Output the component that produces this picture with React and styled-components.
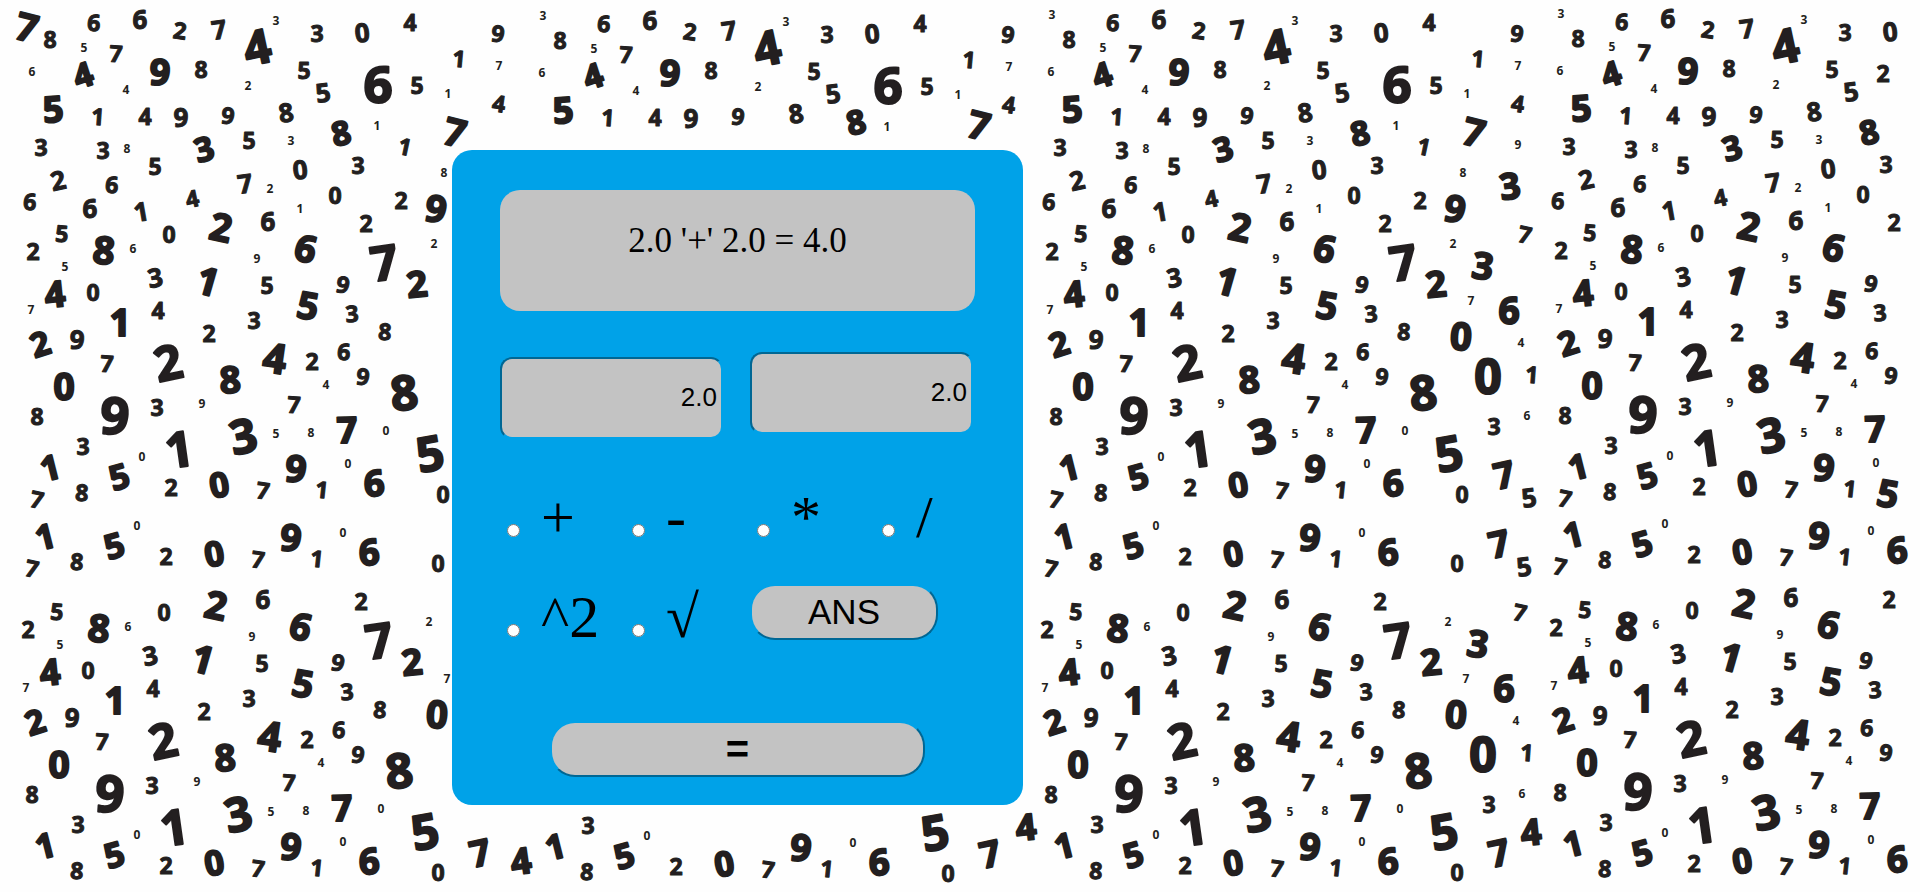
import React, { useState } from "react";
import styled, { createGlobalStyle } from "styled-components";

const BLUE = "#00a2e8";
const GREY = "#c3c3c3";
const INK = "#231f20";

const GlobalStyle = createGlobalStyle`
  body {
    margin: 0;
    background: #fefefe;
    overflow-x: hidden;
  }
`;

/* One tile of the wallpaper: digit, centre x, centre y, height, tilt in degrees. */
const TILE = `
3 33 14 9 0|8 50 39 18 0|6 94 22 18 4|6 140 19 20 0|2 180 30 18 8|7 219 29 20 -8|4 257 47 36 -12|3 276 20 9 0
3 317 33 18 0|0 362 32 20 -6|4 410 22 18 0|5 84 47 9 0|7 116 53 18 4|1 459 58 18 5|6 32 71 9 0|4 83 75 26 -18
9 160 72 28 4|8 201 69 18 0|5 304 70 18 0|2 248 85 9 0|4 126 89 9 0|6 378 84 39 0|5 323 92 20 -8|5 417 85 18 0
1 448 93 9 0|5 53 109 28 -4|1 98 116 18 4|4 145 116 18 0|9 181 117 20 0|9 228 115 18 8|8 286 112 20 -8
8 341 133 26 -12|1 377 125 9 0|7 455 132 30 14|3 41 147 18 0|3 103 150 18 0|8 127 148 9 0|5 155 166 18 0
3 204 149 26 -15|5 249 140 18 0|3 291 140 9 0|1 405 146 18 12|0 300 169 20 -6|3 358 165 18 0|8 444 172 9 0
2 58 180 20 -12|6 112 184 18 4|7 245 183 20 -8|2 270 188 9 0|0 335 195 18 0|6 30 201 18 4|6 90 208 20 0
1 141 211 20 -10|4 192 198 18 -12|1 300 208 9 0|2 401 200 18 0|9 436 208 29 10|2 221 227 30 12|6 268 221 20 0
2 366 223 18 0|5 62 233 18 4|0 169 234 18 0|6 133 248 9 0|8 104 250 30 6|2 33 251 18 0|9 257 258 9 0
6 306 248 29 14|7 384 262 37 -8|2 434 243 9 0|5 65 266 9 0|3 155 277 20 -10|1 208 281 30 16|5 267 285 18 0
9 343 284 18 12|2 417 284 28 -6|4 55 294 28 -6|0 93 292 18 0|7 31 309 9 0|1 120 322 29 0|4 158 310 18 0
3 254 320 18 0|5 308 305 29 10|3 352 313 18 -4|2 209 333 18 0|8 385 331 18 4|2 40 344 26 -18|9 77 339 20 4
7 107 363 18 4|2 168 362 37 -12|4 275 358 32 8|2 312 361 18 0|6 344 351 18 4|8 230 379 29 -3|4 326 384 9 0
9 363 376 18 8|8 404 392 37 -6|0 64 386 29 0|9 115 415 39 4|3 157 407 18 0|9 202 403 9 0|7 294 404 18 4
3 243 436 36 -12|5 276 433 9 0|8 311 432 9 0|7 347 430 28 -2|0 386 430 9 0|8 37 416 18 0|3 83 446 18 0
1 179 449 38 -8|5 430 453 37 -10|1 50 467 27 -14|0 142 456 9 0|5 119 476 27 -16|9 296 468 29 6|0 348 463 9 0
8 82 492 18 4|7 37 499 18 12|2 171 487 18 0|0 219 484 27 -10|7 263 490 18 8|1 322 489 18 6|6 374 483 28 -4
0 443 494 18 0|9 498 33 18 8|7 499 65 9 0|4 499 103 18 8|9 499 144 9 0|3 491 186 28 -8|7 506 234 18 12
3 464 265 29 8|7 452 300 9 0|6 490 310 29 0|0 442 336 30 4|4 502 342 9 0|0 469 376 37 0|1 513 374 18 4
3 475 426 18 0|6 508 415 9 0|7 485 475 28 -12|5 510 497 20 -8`
  .trim()
  .split(/[|\n]/)
  .map((entry) => entry.split(" ").map(Number));

/* The tile is stamped in four columns, each with a full row, a thin row and a lower row. */
const always = () => true;
const thin = (d, x, y) => y >= 455;
const lower = (d, x, y) => y >= 219 && y < 497;

const STAMPS = [
  { dx: 0, dy: 0, keep: (d, x, y) => (x < 450 || y < 135) && !(x === 33 && y === 14) && y !== 336 },
  { dx: -5, dy: 69, keep: (d, x, y) => thin(d, x, y) && x < 450 },
  { dx: -5, dy: 378, keep: (d, x, y) => lower(d, x, y) && (x < 455 || y > 470) },
  { dx: 510, dy: 1, keep: (d, x, y) => y < 130 },
  { dx: 505, dy: 379, keep: (d, x, y) => lower(d, x, y) && y > 440 && x !== 179 },
  { dx: 1019, dy: 0, keep: always },
  { dx: 1014, dy: 69, keep: thin },
  { dx: 1014, dy: 378, keep: lower },
  { dx: 1528, dy: -1, keep: (d, x) => x < 370 },
  { dx: 1523, dy: 67, keep: (d, x, y) => thin(d, x, y) && x < 376 },
  { dx: 1523, dy: 376, keep: (d, x, y) => lower(d, x, y) && x < 376 },
];

const EXTRAS = [
  [7, 27, 27, 30, 14],
  [8, 856, 122, 26, -12],
  [7, 979, 125, 30, 14],
  [4, 521, 861, 28, -8],
  [4, 1026, 827, 28, -6],
  [4, 1531, 832, 28, -6],
  [2, 1883, 73, 18, 0],
  [5, 1888, 493, 29, 10],
];

const DIGITS = [
  ...STAMPS.flatMap(({ dx, dy, keep }) =>
    TILE.filter(([d, x, y]) => keep(d, x, y)).map(([d, x, y, h, r]) => [d, x + dx, y + dy, h, r])
  ),
  ...EXTRAS,
];

const WallpaperSvg = styled.svg`
  position: absolute;
  inset: 0;
  z-index: -1;
  width: 100%;
  height: 100%;
  overflow: hidden;
  pointer-events: none;
  user-select: none;
`;

const Digit = styled.text`
  font-family: "Open Sans", "Noto Sans", sans-serif;
  font-weight: 700;
  font-size: ${(p) => Math.round((p.$h - p.$stroke) / 0.73)}px;
  text-anchor: middle;
  fill: ${INK};
  stroke: ${INK};
  stroke-width: ${(p) => p.$stroke}px;
  stroke-linejoin: round;
`;

function Wallpaper() {
  return (
    <WallpaperSvg aria-hidden="true">
      {DIGITS.map(([digit, x, y, h, tilt], i) => {
        const stroke = h > 24 ? 2 : h > 12 ? 1 : 0;
        return (
          <Digit
            key={i}
            $h={h}
            $stroke={stroke}
            x={x}
            y={y + Math.round((h - stroke) / 2)}
            transform={`rotate(${tilt} ${x} ${y})`}
          >
            {digit}
          </Digit>
        );
      })}
    </WallpaperSvg>
  );
}

const Page = styled.main`
  position: relative;
  z-index: 0;
  box-sizing: border-box;
  min-height: 100vh;
  padding: 150px 24px 87px 452px;
  font-family: "Liberation Serif", "Times New Roman", serif;
  color: #000;
`;

const Calculator = styled.form`
  box-sizing: border-box;
  width: 100%;
  max-width: 571px;
  padding: 40px 48px 28px;
  border-radius: 20px;
  background: ${BLUE};
`;

const Display = styled.output`
  display: block;
  box-sizing: border-box;
  min-height: 121px;
  padding-top: 31px;
  border-radius: 20px;
  background: ${GREY};
  font-size: 35px;
  line-height: 40px;
  text-align: center;
`;

const Operands = styled.div`
  display: flex;
  align-items: flex-start;
  gap: 27px;
  margin-top: 41px;
`;

const NumberBox = styled.input`
  box-sizing: border-box;
  width: 223px;
  height: 82px;
  margin: ${(p) => (p.$lowered ? "5px" : "0")} 0 0;
  padding: 0 4px 2px;
  border: 2px inset ${BLUE};
  border-radius: 12px;
  background: ${GREY};
  color: #000;
  font-family: "Liberation Sans", Arial, sans-serif;
  font-size: 26px;
  text-align: right;
`;

const Operations = styled.div`
  display: grid;
  grid-template-columns: repeat(3, 125px) 1fr;
  grid-auto-rows: 100px;
  margin-top: 28px;
`;

const Choice = styled.label`
  display: flex;
  align-items: baseline;
  gap: 21px;
  padding-left: 7px;
  font-size: 60px;
  line-height: 100px;
`;

const Radio = styled.input`
  flex: none;
  width: 13px;
  height: 13px;
  margin: 0 0 2px;
`;

const PillButton = styled.button`
  display: block;
  box-sizing: border-box;
  width: ${(p) => p.$width}px;
  height: 56px;
  padding: 0;
  border: 2px outset ${BLUE};
  border-radius: 25px;
  background: ${GREY};
  color: #000;
  font-family: "Liberation Sans", Arial, sans-serif;
  font-size: ${(p) => p.$size}px;
  font-weight: ${(p) => (p.$bold ? 700 : 400)};
  line-height: 50px;
`;

const AnswerCell = styled.div`
  grid-column: span 2;
  align-self: center;
  padding-bottom: 10px;
`;

const EqualsRow = styled.div`
  display: flex;
  justify-content: center;
  margin-top: 54px;
`;

const OPERATIONS = ["+", "-", "*", "/", "^2", "√"];

export default function App() {
  const [first, setFirst] = useState("2.0");
  const [second, setSecond] = useState("2.0");

  return (
    <>
      <GlobalStyle />
      <Page>
        <Wallpaper />
        <Calculator onSubmit={(event) => event.preventDefault()}>
          <Display>2.0 '+' 2.0 = 4.0</Display>
          <Operands>
            <NumberBox
              $lowered
              type="text"
              inputMode="decimal"
              aria-label="First number"
              value={first}
              onChange={(event) => setFirst(event.target.value)}
            />
            <NumberBox
              type="text"
              inputMode="decimal"
              aria-label="Second number"
              value={second}
              onChange={(event) => setSecond(event.target.value)}
            />
          </Operands>
          <Operations role="group" aria-label="Operation">
            {OPERATIONS.map((sign) => (
              <Choice key={sign}>
                <Radio type="radio" name="operation" value={sign} />
                {sign}
              </Choice>
            ))}
            <AnswerCell>
              <PillButton type="button" $width={188} $size={35}>
                ANS
              </PillButton>
            </AnswerCell>
          </Operations>
          <EqualsRow>
            <PillButton type="submit" $width={375} $size={40} $bold>
              =
            </PillButton>
          </EqualsRow>
        </Calculator>
      </Page>
    </>
  );
}
